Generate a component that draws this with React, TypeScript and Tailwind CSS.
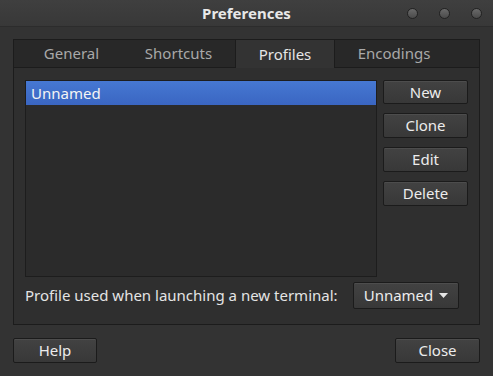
import React from "react";

const Btn = ({ children, className = "" }: { children: React.ReactNode; className?: string }) => (
  <div
    className={`flex items-center justify-center rounded-[2px] border border-[#1b1b1b] bg-gradient-to-b from-[#424242] to-[#383838] text-[#ececec] shadow-[inset_0_1px_0_rgba(255,255,255,0.06)] ${className}`}
  >
    {children}
  </div>
);

const Dot = () => (
  <div className="h-[11px] w-[11px] rounded-full border border-[#222] bg-gradient-to-b from-[#6a6a6a] to-[#4a4a4a]" />
);

export default function App() {
  return (
    <div
      className="flex h-[376px] w-[493px] flex-col bg-[#333333] text-[15px] text-[#dcdcdc]"
      style={{ fontFamily: '"Noto Sans", "Open Sans", sans-serif' }}
    >
      {/* title bar */}
      <div className="relative flex h-[27px] items-center justify-center bg-gradient-to-b from-[#3f3f3f] to-[#383838] border-b border-[#2c2c2c]">
        <span className="text-[15px] font-bold text-[#e8e8e8]">Preferences</span>
        <div className="absolute right-[11px] top-[8px] flex gap-[21px]">
          <Dot />
          <Dot />
          <Dot />
        </div>
      </div>

      {/* notebook */}
      <div className="mx-[13px] mt-[12px] flex h-[286px] flex-col border border-[#1c1c1c] bg-[#2f2f2f]">
        <div className="flex h-[28px] border-b border-[#1c1c1c] bg-[#282828] text-[#a9a9a9]">
          <div className="flex w-[115px] items-center justify-center">General</div>
          <div className="flex w-[106px] items-center justify-center pr-[7px]">Shortcuts</div>
          <div className="-mb-px flex w-[100px] items-center justify-center border-x border-[#1c1c1c] bg-[#333333] text-[#e6e6e6]">Profiles</div>
          <div className="flex w-[118px] items-center justify-center">Encodings</div>
        </div>
        <div className="flex flex-col px-[11px] pt-[12px]">
          <div className="flex gap-[6px]">
            <div className="h-[197px] w-[353px] border border-[#1d1d1d] bg-[#2b2b2b]">
              <div className="flex h-[24px] items-center bg-gradient-to-b from-[#4678d2] to-[#3a66c2] pl-[5px] text-[#f4f4f4]">Unnamed</div>
            </div>
            <div className="flex flex-col gap-[9px]">
              <Btn className="h-[24px] w-[85px]">New</Btn>
              <Btn className="h-[25px] w-[85px]">Clone</Btn>
              <Btn className="h-[25px] w-[85px]">Edit</Btn>
              <Btn className="h-[25px] w-[85px]">Delete</Btn>
            </div>
          </div>
          <div className="mt-[5px] flex items-center">
            <span className="w-[316px] text-[#e4e4e4]">Profile used when launching a new terminal:</span>
            <Btn className="ml-[12px] h-[27px] w-[106px] gap-[6px]">
              <span>Unnamed</span>
              <svg width="9" height="5" viewBox="0 0 9 5"><path d="M0 0h9L4.5 5z" fill="#e6e6e6" /></svg>
            </Btn>
          </div>
        </div>
      </div>

      {/* bottom buttons */}
      <div className="mx-[13px] mt-[13px] flex justify-between">
        <Btn className="h-[25px] w-[84px]">Help</Btn>
        <Btn className="h-[25px] w-[85px]">Close</Btn>
      </div>
    </div>
  );
}
